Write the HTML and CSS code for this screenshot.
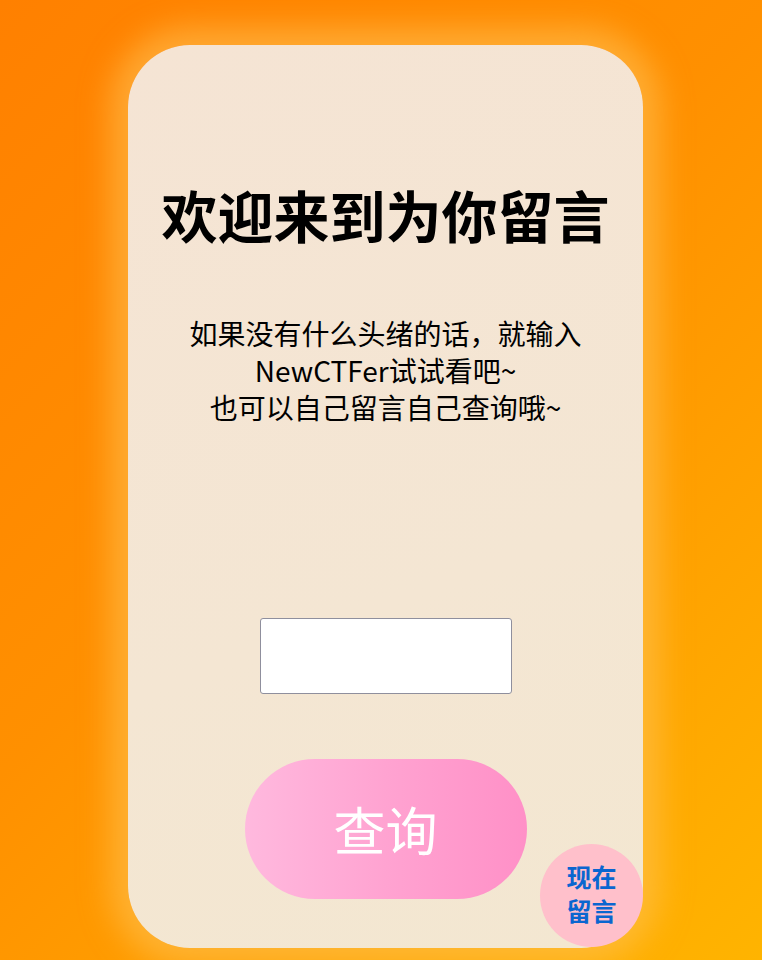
FILE: index.html
```html
<!DOCTYPE html>
<html lang="zh">
<head>
<meta charset="utf-8">
<title>为你留言</title>
<link rel="stylesheet" href="styles.css">
</head>
<body>
<main class="card">
  <h1 class="title">欢迎来到为你留言</h1>
  <p class="hint">如果没有什么头绪的话，就输入<br>NewCTFer试试看吧~<br>也可以自己留言自己查询哦~</p>
  <form class="query" onsubmit="return false">
    <input class="field" type="text">
    <button class="btn" type="submit">查询</button>
  </form>
  <a class="now" href="#">现在<br>留言</a>
</main>
</body>
</html>
```
FILE: styles.css
```css
html, body {
  margin: 0;
  padding: 0;
  height: 100%;
}
body {
  background: linear-gradient(135deg, #ff8000 0%, #ff9000 45%, #ffb400 100%);
  font-family: "Noto Sans CJK SC", "Noto Sans", sans-serif;
  overflow: hidden;
}
.card {
  position: relative;
  box-sizing: border-box;
  width: 515px;
  height: 903px;
  margin: 45px 0 0 128px;
  padding-top: 136px;
  border-radius: 62px;
  background: linear-gradient(160deg, #f5e4d4 0%, #f4e6d3 60%, #f3e7d1 100%);
  box-shadow: 0 0 30px 18px rgba(255, 196, 90, 0.55);
  display: flex;
  flex-direction: column;
  align-items: center;
  text-align: center;
}
.title {
  margin: 0;
  font-size: 56px;
  line-height: 66px;
  font-weight: 700;
  color: #000;
}
.hint {
  margin: 68px 0 0;
  font-size: 28px;
  line-height: 37px;
  color: #000;
}
.query {
  display: flex;
  flex-direction: column;
  align-items: center;
  margin-top: 192px;
}
.field {
  box-sizing: border-box;
  width: 252px;
  height: 76px;
  border: 1px solid #8f8f9d;
  border-radius: 3px;
  background: #fff;
  margin: 0;
}
.btn {
  margin-top: 65px;
  width: 282px;
  height: 140px;
  border: none;
  border-radius: 70px;
  background: linear-gradient(90deg, #ffb9de 0%, #ffa3d1 50%, #ff90c7 100%);
  color: #fff;
  font-family: "Noto Sans CJK SC", sans-serif;
  font-size: 52px;
  line-height: 1;
  padding: 0;
}
.now {
  position: absolute;
  right: 0;
  bottom: 1px;
  box-sizing: border-box;
  width: 103px;
  height: 103px;
  padding-bottom: 6px;
  border-radius: 50%;
  background: #ffc0cb;
  color: #0a66d0;
  font-weight: 700;
  font-size: 25px;
  line-height: 34px;
  text-decoration: none;
  display: flex;
  align-items: center;
  justify-content: center;
  text-align: center;
}
```
